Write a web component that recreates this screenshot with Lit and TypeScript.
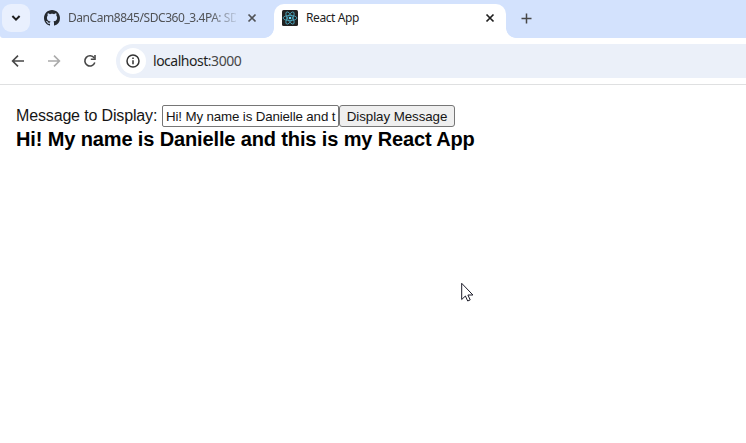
import { LitElement, html, css, svg } from "lit";
import { customElement } from "lit/decorators.js";

const cross = svg`<path d="M1.5 1.5l7 7M8.5 1.5l-7 7" fill="none" stroke="currentColor" stroke-width="1.7"/>`;

@customElement("app-root")
export class AppRoot extends LitElement {
  static styles = css`
    :host { display: block; position: relative; width: 746px; height: 443px; overflow: hidden; background: #fff; font-family: "Liberation Sans", Arial, sans-serif; color: #000; }
    * { box-sizing: border-box; }
    svg { display: block; flex: none; }
    .strip { display: flex; height: 38px; background: #d3e2fd; border-bottom-left-radius: 3px; font: 12px/16px "Noto Sans", sans-serif; color: #505256; }
    .search { width: 28px; height: 28px; margin: 4px 0 0 2px; border-radius: 9px; background: #e9f0fe; display: flex; align-items: center; justify-content: center; color: #1f1f1f; }
    .tab { display: flex; align-items: center; height: 28px; margin-top: 4px; }
    .idle { width: 244px; padding-left: 14px; }
    .label { white-space: nowrap; margin-left: 8px; }
    .idle .label { width: 168px; letter-spacing: -0.44px; -webkit-mask-image: linear-gradient(90deg, #000 84%, transparent 103%); mask-image: linear-gradient(90deg, #000 84%, transparent 103%); }
    .idle .close { margin-left: 11px; }
    .active { position: relative; width: 232px; height: 34px; padding: 0 11px 6px 8px; background: #fff; border-radius: 10px 10px 0 0; color: #1f1f1f; }
    .active::before, .active::after { content: ""; position: absolute; bottom: 0; width: 10px; height: 10px; }
    .active::before { left: -10px; background: radial-gradient(circle at 0 0, transparent 9.5px, #fff 10.2px); }
    .active::after { right: -10px; background: radial-gradient(circle at 100% 0, transparent 9.5px, #fff 10.2px); }
    .active .label { flex: 1; letter-spacing: -0.4px; }
    .plus { margin: 13px 0 0 15px; }
    .toolbar { display: flex; align-items: center; height: 47px; border-bottom: 1px solid #dfe0e1; padding-left: 10px; color: #474747; }
    .nav { margin-right: 20px; }
    .nav.last { margin-right: 18px; }
    .omni { flex: 1; height: 34px; background: #ebf0f9; border-radius: 17px 0 0 17px; display: flex; align-items: center; padding-left: 4px; font: 14px/18px "Noto Sans", sans-serif; }
    .info { width: 26px; height: 26px; border-radius: 50%; background: #fff; display: grid; place-items: center; margin-right: 7px; }
    .host { color: #1f1f1f; }
    .url { letter-spacing: -0.48px; }
    .page { padding: 20px 16px 0; }
    .row { display: flex; height: 22px; align-items: center; font-size: 16px; line-height: 20px; white-space: nowrap; color: #151515; }
    .prompt { width: 146px; letter-spacing: -0.15px; }
    .field, .button { height: 22px; border: 1px solid #767676; font-size: 13.333px; line-height: 21px; }
    .field { width: 177px; padding: 0 3px; border-radius: 2px; letter-spacing: -0.14px; }
    .button { width: 116px; background: #efefef; border-radius: 3px; text-align: center; letter-spacing: -0.06px; }
    .title { margin: 1px 0 0; font-size: 20px; line-height: 23px; font-weight: 700; white-space: nowrap; letter-spacing: -0.13px; }
    .pointer { position: absolute; left: 461px; top: 282px; }
  `;

  render() {
    return html`
      <div class="strip">
        <div class="search"><svg width="10" height="8" viewBox="0 0 10 8"><path d="M1.4 2L5 5.6 8.6 2" fill="none" stroke="currentColor" stroke-width="2"/></svg></div>
        <div class="tab idle">
          <svg width="16" height="16" viewBox="0 0 16 16"><path fill="#24292f" d="M8 0C3.58 0 0 3.58 0 8c0 3.54 2.29 6.53 5.47 7.59.4.07.55-.17.55-.38 0-.19-.01-.82-.01-1.49-2.01.37-2.53-.49-2.69-.94-.09-.23-.48-.94-.82-1.13-.28-.15-.68-.52-.01-.53.63-.01 1.08.58 1.23.82.72 1.21 1.87.87 2.33.66.07-.52.28-.87.51-1.07-1.78-.2-3.64-.89-3.64-3.95 0-.87.31-1.59.82-2.15-.08-.2-.36-1.02.08-2.12 0 0 .67-.21 2.2.82.64-.18 1.32-.27 2-.27s1.36.09 2 .27c1.53-1.04 2.2-.82 2.2-.82.44 1.1.16 1.92.08 2.12.51.56.82 1.27.82 2.15 0 3.07-1.87 3.75-3.65 3.95.29.25.54.73.54 1.48 0 1.07-.01 1.93-.01 2.2 0 .21.15.46.55.38A8.01 8.01 0 0016 8c0-4.42-3.58-8-8-8z"/></svg>
          <span class="label">DanCam8845/SDC360_3.4PA: SD</span>
          <svg class="close" width="10" height="10" viewBox="0 0 10 10">${cross}</svg>
        </div>
        <div class="tab active">
          <svg width="16" height="16" viewBox="0 0 16 16"><rect width="16" height="16" rx="1.5" fill="#222"/><g fill="none" stroke="#4ca9c1" stroke-width=".85"><ellipse cx="8" cy="8" rx="6.9" ry="2.6"/><ellipse cx="8" cy="8" rx="6.9" ry="2.6" transform="rotate(60 8 8)"/><ellipse cx="8" cy="8" rx="6.9" ry="2.6" transform="rotate(120 8 8)"/></g><circle cx="8" cy="8" r="1.3" fill="#61dafb"/></svg>
          <span class="label">React App</span>
          <svg width="10" height="10" viewBox="0 0 10 10">${cross}</svg>
        </div>
        <svg class="plus" width="11" height="11" viewBox="0 0 11 11"><path d="M5.5 .5v10M.5 5.5h10" stroke="#474747" stroke-width="1.5"/></svg>
      </div>
      <div class="toolbar">
        <svg class="nav" width="16" height="16" viewBox="0 0 16 16"><path d="M14 8H3M8 2.6L2.6 8 8 13.4" fill="none" stroke="currentColor" stroke-width="1.6"/></svg>
        <svg class="nav" width="16" height="16" viewBox="0 0 16 16"><path d="M2 8h11M8 2.6L13.4 8 8 13.4" fill="none" stroke="#aaa" stroke-width="1.6"/></svg>
        <svg class="nav last" width="16" height="16" viewBox="0 0 16 16"><path d="M12.8 9.5A5.1 5.1 0 1 1 12.2 5" fill="none" stroke="currentColor" stroke-width="1.6"/><path d="M13.8 2v5H8.8V5.6h3.4V2z" fill="currentColor"/></svg>
        <div class="omni">
          <span class="info"><svg width="14" height="14" viewBox="0 0 14 14"><circle cx="7" cy="7" r="6" fill="none" stroke="#333" stroke-width="1.5"/><path d="M7 6.2v4M7 3.5v1.5" stroke="#333" stroke-width="1.5"/></svg></span>
          <span class="url"><span class="host">localhost</span>:3000</span>
        </div>
      </div>
      <div class="page">
        <div class="row">
          <span class="prompt">Message to Display:</span>
          <div class="field">Hi! My name is Danielle and t</div>
          <div class="button">Display Message</div>
        </div>
        <h2 class="title">Hi! My name is Danielle and this is my React App</h2>
      </div>
      <svg class="pointer" width="14" height="21" viewBox="0 0 14 21"><path d="M.7 1.3v16.2l3.7-3.5 2.3 5 2.5-1.1-2.3-4.9h5z" fill="#fff" stroke="#1b1b28" stroke-width="1"/></svg>
    `;
  }
}
